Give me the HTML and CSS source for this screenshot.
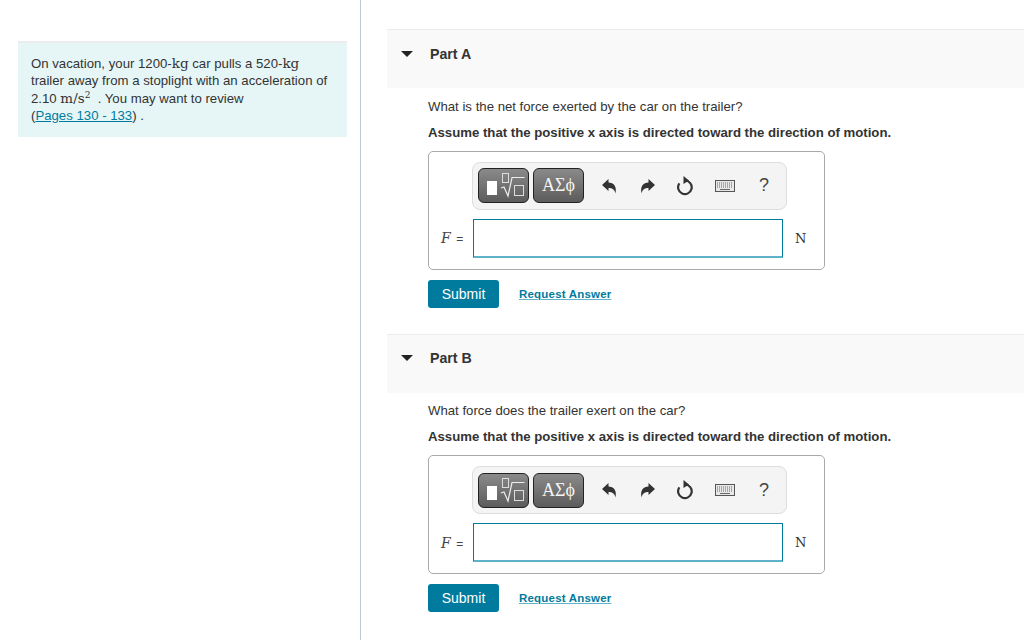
FILE: index.html
```html
<!DOCTYPE html>
<html lang="en">
<head>
    <meta charset="UTF-8">
    <title>Part A and Part B</title>
    <link rel="stylesheet" href="styles.css">
</head>
<body>
    <svg class="defs" width="0" height="0">
        <symbol id="templates" viewBox="0 0 49 33">
            <rect x="8" y="12" width="10" height="14" fill="#fff"/>
            <rect x="23.5" y="4.5" width="6" height="9" fill="none" stroke="#ddd"/>
            <path d="M22 19 L25 18 L29 27 L33 8.5 H45.5" fill="none" stroke="#eee" stroke-width="1.2"/>
            <rect x="35.5" y="16.5" width="9" height="10" fill="none" stroke="#ddd"/>
        </symbol>
        <symbol id="undo" viewBox="0 0 15 16">
            <path d="M0 7 L6.5 1 V4.5 C11.5 4.5 15 8 13.5 15.5 C12.5 11.5 10.5 10 6.5 10 V13 Z"/>
        </symbol>
        <symbol id="redo" viewBox="0 0 15 16">
            <path d="M15 7 L8.5 1 V4.5 C3.5 4.5 0 8 1.5 15.5 C2.5 11.5 4.5 10 8.5 10 V13 Z"/>
        </symbol>
        <symbol id="reset" viewBox="0 0 18 20">
            <path d="M9 4.5 A6.8 6.8 0 1 1 3.4 7.3" fill="none" stroke="#333" stroke-width="2.2"/>
            <path d="M7.5 0 L13 4.5 L7.5 8 Z"/>
        </symbol>
        <symbol id="keyboard" viewBox="0 0 20 12">
            <rect x="0.5" y="0.5" width="19" height="11" fill="#e8e8e8" stroke="#555"/>
            <path d="M2 3h16M2 5h16M2 7h16" stroke="#666" stroke-dasharray="1 1"/>
            <path d="M5 9.5h10" stroke="#666"/>
        </symbol>
    </svg>

    <aside class="sidebar">
        <div class="intro">
            On vacation, your 1200-<span class="math">kg</span> car pulls a 520-<span class="math">kg</span><br>
            trailer away from a stoplight with an acceleration of<br>
            2.10 <span class="math">m/s<sup>2</sup></span> &nbsp;. You may want to review<br>
            (<a href="#">Pages 130 - 133</a>) .
        </div>
    </aside>

    <main class="parts">
        <section class="part">
            <div class="part-head">
                <span class="caret"></span>
                <h2>Part A</h2>
            </div>
            <div class="part-body">
                <p class="question">What is the net force exerted by the car on the trailer?</p>
                <p class="assume">Assume that the positive x axis is directed toward the direction of motion.</p>
                <div class="answer-box">
                    <div class="toolbar">
                        <button class="tool-btn"><svg class="templates"><use href="#templates"/></svg></button>
                        <button class="tool-btn greek">ΑΣϕ</button>
                        <svg class="icon undo"><use href="#undo"/></svg>
                        <svg class="icon redo"><use href="#redo"/></svg>
                        <svg class="icon reset"><use href="#reset"/></svg>
                        <svg class="icon keyboard"><use href="#keyboard"/></svg>
                        <span class="help">?</span>
                    </div>
                    <div class="answer-row">
                        <label><i>F</i> <span>=</span></label>
                        <input type="text" class="answer-input">
                        <span class="unit">N</span>
                    </div>
                </div>
                <div class="actions">
                    <button class="submit">Submit</button>
                    <a href="#" class="request">Request Answer</a>
                </div>
            </div>
        </section>

        <section class="part">
            <div class="part-head">
                <span class="caret"></span>
                <h2>Part B</h2>
            </div>
            <div class="part-body">
                <p class="question">What force does the trailer exert on the car?</p>
                <p class="assume">Assume that the positive x axis is directed toward the direction of motion.</p>
                <div class="answer-box">
                    <div class="toolbar">
                        <button class="tool-btn"><svg class="templates"><use href="#templates"/></svg></button>
                        <button class="tool-btn greek">ΑΣϕ</button>
                        <svg class="icon undo"><use href="#undo"/></svg>
                        <svg class="icon redo"><use href="#redo"/></svg>
                        <svg class="icon reset"><use href="#reset"/></svg>
                        <svg class="icon keyboard"><use href="#keyboard"/></svg>
                        <span class="help">?</span>
                    </div>
                    <div class="answer-row">
                        <label><i>F</i> <span>=</span></label>
                        <input type="text" class="answer-input">
                        <span class="unit">N</span>
                    </div>
                </div>
                <div class="actions">
                    <button class="submit">Submit</button>
                    <a href="#" class="request">Request Answer</a>
                </div>
            </div>
        </section>
    </main>
</body>
</html>
```

FILE: styles.css
```css
* {
    box-sizing: border-box;
    margin: 0;
    padding: 0;
}

html, body {
    height: 640px;
    overflow: hidden;
}

body {
    display: flex;
    font-family: "Liberation Sans", Arial, sans-serif;
    font-size: 13.2px;
    color: #333;
    background: white;
}

.defs {
    position: absolute;
}

a {
    color: #007b9e;
}

.sidebar {
    width: 361px;
    flex: none;
    padding: 41px 13px 0 18px;
    border-right: 1px solid #b9ccd8;
}

.intro {
    height: 96px;
    padding: 12px 13px 0;
    background: #e6f6f7;
    border-top: 2px solid #ececec;
    line-height: 17.3px;
}

.math {
    font-family: "DejaVu Serif", "Liberation Serif", serif;
    font-size: 13.5px;
}

.math sup {
    font-size: 9px;
    line-height: 0;
}

.parts {
    flex: 1;
    padding: 29.2px 0 0 26px;
}

.part-head {
    display: flex;
    align-items: flex-start;
    height: 59px;
    padding: 15.6px 0 0 14px;
    background: #f9f9f9;
    border-top: 1px solid #ececec;
}

.caret {
    width: 0;
    height: 0;
    margin: 5px 17px 0 0;
    border-left: 6px solid transparent;
    border-right: 6px solid transparent;
    border-top: 6px solid #222;
}

.part-head h2 {
    font-size: 14.2px;
    line-height: 16px;
    font-weight: bold;
    color: #333;
}

.part-body {
    padding: 9.8px 0 0 41px;
    height: 245.4px;
}

.question {
    line-height: 17px;
}

.assume {
    margin-top: 9px;
    line-height: 17px;
    font-weight: bold;
}

.answer-box {
    width: 397px;
    height: 119px;
    margin-top: 10px;
    padding: 10px 0 0 43px;
    border: 1px solid #aaa;
    border-radius: 5px;
}

.toolbar {
    display: flex;
    align-items: center;
    width: 315px;
    height: 48px;
    padding-left: 5px;
    background: #f4f4f4;
    border: 1px solid #ddd;
    border-radius: 8px;
}

.tool-btn {
    height: 35px;
    width: 51px;
    margin-right: 4px;
    color: #f4f4f4;
    background: linear-gradient(#8a8a8a, #5c5c5c);
    border: 1px solid #222;
    border-radius: 6px;
    font-family: "Liberation Serif", serif;
}

.templates {
    display: block;
    width: 49px;
    height: 33px;
}

.greek {
    font-size: 18px;
}

.icon {
    fill: #333;
    flex: none;
}

.undo {
    width: 15px;
    height: 16px;
    margin-left: 14px;
}

.redo {
    width: 15px;
    height: 16px;
    margin-left: 23px;
}

.reset {
    width: 18px;
    height: 20px;
    margin-left: 21px;
}

.keyboard {
    width: 20px;
    height: 12px;
    margin-left: 21px;
}

.help {
    margin-left: 24px;
    font-size: 18px;
    color: #444;
}

.answer-row {
    display: flex;
    align-items: center;
    margin-top: 9px;
    margin-left: -31px;
}

.answer-row label {
    width: 32px;
    font-family: "DejaVu Serif", serif;
    font-size: 14px;
    color: #444;
}

.answer-row label span {
    margin-left: 1px;
    font-family: "Liberation Sans", sans-serif;
    font-size: 12px;
}

.answer-input {
    width: 310px;
    height: 39px;
    background: white;
    border: 1px solid #007b9e;
    border-bottom: 2px solid #5fb2c9;
    outline: none;
}

.unit {
    margin-left: 12px;
    font-family: "DejaVu Serif", serif;
    font-size: 13px;
}

.actions {
    display: flex;
    align-items: center;
    margin-top: 10px;
}

.submit {
    width: 71px;
    height: 28px;
    color: white;
    background: #007b9e;
    border: none;
    border-radius: 3px;
    font-family: "Liberation Sans", sans-serif;
    font-size: 14px;
}

.request {
    margin-left: 20px;
    font-size: 11.5px;
    font-weight: bold;
    letter-spacing: 0.2px;
    text-decoration-color: #5fb2c9;
}
```
